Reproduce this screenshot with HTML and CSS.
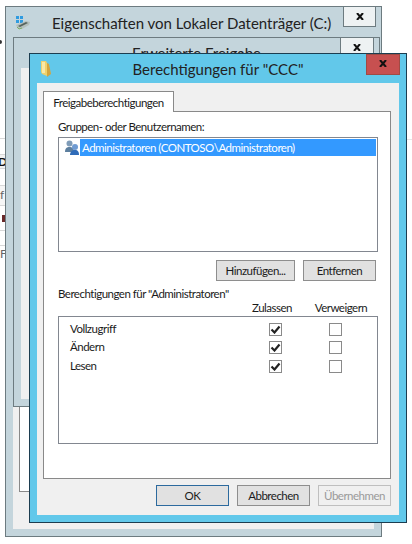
FILE: index.html
```html
<!DOCTYPE html>
<html lang="de">

<head>
    <meta charset="UTF-8">
    <meta name="viewport" content="width=device-width, initial-scale=1.0">
    <title>Berechtigungen für "CCC"</title>
    <link rel="stylesheet" href="styles.css">
</head>

<body>

    <!-- what is left of the explorer behind the dialogs -->
    <div class="desk-dot"></div>
    <div class="desk-rows">
        <div class="desk-row row-a"></div>
        <div class="desk-row row-b desk-bold">D</div>
        <div class="desk-row row-c"></div>
        <div class="desk-row row-d">f</div>
        <div class="desk-row row-e"><span class="desk-mark"></span></div>
        <div class="desk-row row-f"></div>
        <div class="desk-row row-g">Fr</div>
    </div>
    <div class="desk-line"></div>

    <!-- Eigenschaften -->
    <div class="window window-back">
        <div class="titlebar">
            <svg class="drive-icon" width="16" height="14" viewBox="0 0 16 14">
                <path d="M1 0h3v3H1zM5 0h3v3H5zM1 4h3v3H1zM5 4h3v3H5z" fill="#2f9be0"/>
                <path d="M1 9l10-4 4 1-1 3-7 4H3z" fill="#b4bfbc"/>
                <path d="M3 10l8-4 2 1-8 4z" fill="#56635e"/>
                <path d="M2 11l2 2 3-1" stroke="#7fae6a" fill="none"/>
            </svg>
            <span class="title-left">Eigenschaften von Lokaler Datenträger (C:)</span>
            <div class="close close-plain">
                <svg width="8" height="7" viewBox="0 0 8 7"><path d="M1 0l6 7M7 0L1 7" stroke="#111" stroke-width="2" fill="none"/></svg>
            </div>
        </div>
        <div class="client client-back">
            <div class="back-tabpanel"></div>
        </div>
    </div>

    <!-- Erweiterte Freigabe -->
    <div class="window window-middle">
        <div class="titlebar">
            <span class="title-center">Erweiterte Freigabe</span>
            <div class="close close-plain close-middle">
                <svg width="8" height="7" viewBox="0 0 8 7"><path d="M1 0l6 7M7 0L1 7" stroke="#111" stroke-width="2" fill="none"/></svg>
            </div>
        </div>
        <div class="client"></div>
    </div>

    <!-- Berechtigungen -->
    <div class="window window-front">
        <div class="titlebar titlebar-front">
            <svg class="folder-icon" width="12" height="17" viewBox="0 0 12 17">
                <path d="M1 1h5l1 2v13l-5-2-1-2z" fill="#f0d26c"/>
                <path d="M7 3l2 1 2 10-4 3z" fill="#d3a53e"/>
                <path d="M2 2h3v11H2z" fill="#f8e9a8"/>
            </svg>
            <span class="title-center">Berechtigungen für "CCC"</span>
            <div class="close close-red">
                <svg width="8" height="7" viewBox="0 0 8 7"><path d="M1 0l6 7M7 0L1 7" stroke="#111" stroke-width="2" fill="none"/></svg>
            </div>
        </div>
        <div class="client client-front">
            <div class="tab">Freigabeberechtigungen</div>
            <div class="tabpanel">
                <div class="label">Gruppen- oder Benutzernamen:</div>
                <div class="listbox users">
                    <div class="user-row">
                        <svg class="users-icon" width="16" height="16" viewBox="0 0 16 16">
                            <circle cx="5.500" cy="3.500" r="3" fill="#7f9cb8"/>
                            <path d="M1 12c0-4 2-5 4.500-5S10 8 10 12z" fill="#5d7f9f"/>
                            <circle cx="11" cy="7" r="3" fill="#6f9bd2"/>
                            <path d="M6 15c0-3 2-5 5-5s4 2 4 5z" fill="#2f6bb8"/>
                        </svg>
                        <span class="user-name">Administratoren (CONTOSO\Administratoren)</span>
                    </div>
                </div>
                <div class="list-buttons">
                    <button class="btn">Hinzufügen...</button>
                    <button class="btn">Entfernen</button>
                </div>
                <div class="perm-head">
                    <span class="perm-title">Berechtigungen für "Administratoren"</span>
                    <span class="perm-col perm-allow">Zulassen</span>
                    <span class="perm-col perm-deny">Verweigern</span>
                </div>
                <div class="listbox perms">
                    <div class="perm-row">
                        <span class="perm-name">Vollzugriff</span>
                        <span class="check"><svg width="11" height="9" viewBox="0 0 11 9"><path d="M1.500 4.500l3 3 5-6" stroke="#222" stroke-width="2.200" fill="none"/></svg></span>
                        <span class="check"></span>
                    </div>
                    <div class="perm-row">
                        <span class="perm-name">Ändern</span>
                        <span class="check"><svg width="11" height="9" viewBox="0 0 11 9"><path d="M1.500 4.500l3 3 5-6" stroke="#222" stroke-width="2.200" fill="none"/></svg></span>
                        <span class="check"></span>
                    </div>
                    <div class="perm-row">
                        <span class="perm-name">Lesen</span>
                        <span class="check"><svg width="11" height="9" viewBox="0 0 11 9"><path d="M1.500 4.500l3 3 5-6" stroke="#222" stroke-width="2.200" fill="none"/></svg></span>
                        <span class="check"></span>
                    </div>
                </div>
            </div>
            <div class="footer">
                <button class="btn btn-default">OK</button>
                <button class="btn">Abbrechen</button>
                <button class="btn btn-disabled">Übernehmen</button>
            </div>
        </div>
    </div>

</body>

</html>
```

FILE: styles.css
```css
html, body {
    margin: 0;
    height: 100%;
}

body {
    position: relative;
    width: 412px;
    height: 544px;
    overflow: hidden;
    background: #fff;
    font-family: Lato, "Open Sans", sans-serif;
    font-size: 11.500px;
    letter-spacing: -0.5px;
    color: #1b1b1b;
}

/* desktop behind the dialogs */
.desk-dot {
    position: absolute;
    left: -2px;
    top: 40px;
    width: 4px;
    height: 4px;
    border-radius: 50%;
    background: #333;
}

.desk-rows {
    position: absolute;
    left: 0;
    top: 138px;
    width: 5px;
    overflow: hidden;
}

.desk-row {
    box-sizing: border-box;
    border-top: 1px solid #d8d8d8;
    font-size: 12px;
    letter-spacing: 0;
    line-height: 14px;
    color: #666;
    overflow: hidden;
}

.desk-bold {
    font-weight: bold;
    color: #111;
    background: #f2f2f2;
    margin-left: -2px;
}

.row-a { height: 16px; }
.row-b { height: 14px; }
.row-c { height: 17px; }
.row-d { height: 20px; padding-top: 2px; background: #f6f6f6; }
.row-e { height: 25px; padding-top: 9px; }
.row-f { height: 15px; }
.row-g { height: 20px; padding-top: 1px; }

.desk-mark {
    display: block;
    width: 3px;
    height: 7px;
    margin-left: 2px;
    background: #6a2a2a;
}

.desk-line {
    position: absolute;
    left: 382px;
    top: 139px;
    width: 30px;
    height: 1px;
    background: #e6e6e6;
}

/* windows */
.window {
    position: absolute;
    box-sizing: border-box;
    display: flex;
    flex-direction: column;
    border: 1px solid #6d7b80;
    background: #c4d5dc;
}

.window-back {
    left: 5px;
    top: 6px;
    width: 377px;
    height: 531px;
    padding: 0 7px 7px;
}

.window-middle {
    left: 13px;
    top: 37px;
    width: 367px;
    height: 370px;
    padding: 0 7px 7px;
}

.window-front {
    left: 29px;
    top: 53px;
    width: 378px;
    height: 470px;
    padding: 0 7px 7px;
    border-color: #1c3d50;
    background: #62c8ea;
}

.titlebar {
    position: relative;
    display: flex;
    align-items: center;
    height: 30px;
    flex: none;
    font-size: 15px;
    letter-spacing: 0;
    color: #222;
}

.titlebar-front {
    height: 29px;
}

.title-left {
    margin-left: 39px;
    margin-top: 1px;
}

.title-center {
    flex: 1;
    text-align: center;
}

.drive-icon {
    position: absolute;
    left: 2px;
    top: 9px;
}

.folder-icon {
    position: absolute;
    left: 3px;
    top: 6px;
}

.close {
    position: absolute;
    top: -1px;
    box-sizing: border-box;
    display: flex;
    justify-content: center;
    padding-top: 6px;
    width: 33px;
    height: 21px;
    border: 1px solid #6d7b80;
}

.close-plain {
    right: -2px;
    background: #eef2f3;
}

.close-middle {
    width: 34px;
    height: 17px;
}

.close-red {
    right: -1px;
    top: 0;
    width: 34px;
    height: 21px;
    padding-top: 5px;
    border-color: #a04a44;
    background: #c75050;
}

.client {
    flex: 1;
    background: #f0f0f0;
}

.client-back {
    padding: 0 6px 37px;
    display: flex;
    align-items: flex-end;
}

.back-tabpanel {
    flex: 1;
    height: 100px;
    background: #fff;
    border: 1px solid #898989;
}

.client-front {
    display: flex;
    flex-direction: column;
    padding: 8px 8px 0 6px;
}

/* tab */
.tab {
    position: relative;
    z-index: 1;
    box-sizing: border-box;
    width: 131px;
    height: 21px;
    margin-bottom: -1px;
    border: 1px solid #898989;
    border-bottom: 0;
    background: #fff;
    line-height: 21px;
    text-align: center;
}

.tabpanel {
    box-sizing: border-box;
    height: 368px;
    border: 1px solid #898989;
    background: #fff;
    padding: 6px 12px 0 14px;
}

.label {
    line-height: 18px;
    margin-bottom: 1px;
}

.listbox {
    box-sizing: border-box;
    border: 1px solid #828790;
    background: #fff;
}

.users {
    height: 115px;
    padding: 1px;
}

.user-row {
    display: flex;
    align-items: center;
    height: 17px;
    padding-left: 4px;
}

.users-icon {
    flex: none;
}

.user-name {
    flex: 1;
    height: 17px;
    padding-left: 2px;
    background: #3399ff;
    color: #fff;
    line-height: 18px;
    white-space: nowrap;
}

.list-buttons {
    display: flex;
    justify-content: flex-end;
    gap: 8px;
    margin-top: 8px;
    padding-right: 2px;
}

.btn {
    box-sizing: border-box;
    width: 79px;
    height: 21px;
    padding: 0;
    border: 1px solid #8e8e8e;
    background: #e1e1e1;
    font-family: inherit;
    font-size: inherit;
    letter-spacing: inherit;
    color: #1b1b1b;
}

.list-buttons .btn + .btn {
    width: 73px;
}

.perm-head {
    position: relative;
    height: 35px;
}

.perm-title {
    display: block;
    padding-top: 5px;
    line-height: 16px;
    white-space: nowrap;
}

.perm-col {
    position: absolute;
    top: 19px;
    line-height: 16px;
    text-align: center;
    transform: translateX(-50%);
}

.perm-allow {
    left: 214px;
}

.perm-deny {
    left: 283px;
}

.perms {
    height: 128px;
    padding-top: 3px;
}

.perm-row {
    display: grid;
    grid-template-columns: 199px 13px 47px 13px;
    align-items: center;
    height: 18.500px;
    padding-left: 11px;
}

.perm-name {
    margin-top: -2px;
}

.perm-row .check:last-child {
    grid-column: 4;
}

.check {
    box-sizing: border-box;
    display: flex;
    align-items: center;
    justify-content: center;
    width: 13px;
    height: 13px;
    border: 1px solid #8a8a8a;
    background: #fff;
}

.footer {
    display: flex;
    justify-content: flex-end;
    gap: 8px;
    margin-top: 6px;
}

.footer .btn {
    width: 73px;
}

.btn-default {
    border-color: #2c6a9e;
}

.btn-disabled {
    border-color: #bfbfbf;
    background: #f0f0f0;
    color: #9a9a9a;
}
```
